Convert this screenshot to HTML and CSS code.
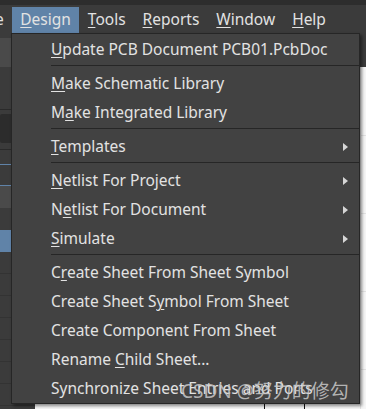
FILE: index.html
```html
<!DOCTYPE html>
<html lang="en">
<head>
    <meta charset="UTF-8" />
    <title>Design Menu</title>
    <link rel="stylesheet" href="styles.css">
</head>
<body>
    <div class="app">
        <div class="title-strip"></div>

        <nav class="menubar">
            <span class="menu-item clipped">e</span>
            <span class="menu-item active"><u>D</u>esign</span>
            <span class="menu-item"><u>T</u>ools</span>
            <span class="menu-item"><u>R</u>eports</span>
            <span class="menu-item"><u>W</u>indow</span>
            <span class="menu-item"><u>H</u>elp</span>
        </nav>

        <div class="workspace">
            <aside class="panel">
                <div class="band gap5"></div>
                <div class="band light h29"></div>
                <div class="band h43 line-bottom"></div>
                <div class="band gap4"></div>
                <div class="band dark h29"></div>
                <div class="band h7 line-bottom"></div>
                <div class="band h14 blue-bottom"></div>
                <div class="band h20 blue-bottom"></div>
                <div class="band light h22"></div>
                <div class="band h22"></div>
                <div class="band blue h22"></div>
                <div class="band rows"></div>
            </aside>
            <div class="editor">
                <div class="toolbar"></div>
                <div class="sheet"></div>
            </div>
        </div>

        <!-- Design dropdown -->
        <ul class="dropdown">
            <li class="item"><span class="label"><u>U</u>pdate PCB Document PCB01.PcbDoc</span></li>
            <li class="sep"></li>
            <li class="item"><span class="label"><u>M</u>ake Schematic Library</span></li>
            <li class="item"><span class="label">M<u>a</u>ke Integrated Library</span></li>
            <li class="sep"></li>
            <li class="item"><span class="label"><u>T</u>emplates</span><span class="arrow"></span></li>
            <li class="sep"></li>
            <li class="item"><span class="label"><u>N</u>etlist For Project</span><span class="arrow"></span></li>
            <li class="item"><span class="label">N<u>e</u>tlist For Document</span><span class="arrow"></span></li>
            <li class="item"><span class="label"><u>S</u>imulate</span><span class="arrow"></span></li>
            <li class="sep"></li>
            <li class="item"><span class="label">C<u>r</u>eate Sheet From Sheet Symbol</span></li>
            <li class="item"><span class="label">Create Sheet S<u>y</u>mbol From Sheet</span></li>
            <li class="item"><span class="label">Create Component From Sheet</span></li>
            <li class="item"><span class="label">Rename <u>C</u>hild Sheet...</span></li>
            <li class="item"><span class="label">Synchronize Sheet Entries and Ports</span></li>
        </ul>

        <div class="watermark">CSDN @努力的修勾</div>
    </div>
</body>
</html>
```

FILE: styles.css
```css
:root {
    --bar-bg: #3b3b3b;
    --menu-bg: #424242;
    --menu-border: #262626;
    --accent: #6083a8;
    --text: #e2e2e2;
    --panel-light: #4a4a4a;
    --panel-dark: #2c2c2c;
}

* {
    margin: 0;
    padding: 0;
    box-sizing: border-box;
}

body {
    width: 366px;
    height: 409px;
    overflow: hidden;
    background-color: var(--bar-bg);
    font-family: "Noto Sans", "DejaVu Sans", sans-serif;
    color: var(--text);
}

.app {
    position: relative;
    height: 409px;
    display: flex;
    flex-direction: column;
}

.title-strip {
    height: 5px;
    background-color: #2d2d2d;
}

/* menu bar */
.menubar {
    height: 28px;
    display: flex;
    align-items: flex-end;
    background-color: var(--bar-bg);
    font-size: 15.5px;
    white-space: nowrap;
}

.menu-item {
    height: 26px;
    line-height: 25px;
    padding: 0 8.5px;
}

.menu-item.clipped {
    margin-left: -5px;
    padding-left: 0;
    padding-right: 8px;
}

.menu-item.active {
    background-color: var(--accent);
}

u {
    text-decoration-thickness: 1px;
    text-underline-offset: 2px;
}

/* background workspace */
.workspace {
    flex: 1;
    display: flex;
}

.panel {
    width: 35px;
    display: flex;
    flex-direction: column;
}

.band {
    flex-shrink: 0;
}

.gap4 { height: 4px; }
.gap5 { height: 5px; }
.h7 { height: 7px; }
.h14 { height: 15px; }
.h20 { height: 21px; }
.h22 { height: 22px; }
.h29 { height: 29px; }
.h43 { height: 43px; }

.band.light {
    background-color: var(--panel-light);
}

.band.dark {
    background-color: var(--panel-dark);
    border-radius: 2px;
}

.band.blue {
    background-color: var(--accent);
}

.line-bottom {
    border-bottom: 1px solid #2a2a2a;
}

.blue-bottom {
    border-bottom: 1px solid var(--accent);
}

.band.rows {
    flex: 1;
    background: repeating-linear-gradient(to bottom, var(--bar-bg) 0 21px, #333 21px 22px);
}

.editor {
    flex: 1;
    display: flex;
    flex-direction: column;
}

.toolbar {
    height: 34px;
    background-color: var(--bar-bg);
}

.sheet {
    flex: 1;
    background-color: #f6f6f6;
    background-image:
        linear-gradient(to right, transparent 229px, #111 229px 230px, transparent 230px 269px, #111 269px 270px, transparent 270px),
        repeating-linear-gradient(to bottom, transparent 0 68px, #e2e2e2 68px 69px, transparent 69px 78px),
        repeating-linear-gradient(to right, transparent 0 325px, #e2e2e2 325px 326px, transparent 326px 400px);
    background-size: 100% 100%, 100% 100%, 100% 100%;
    background-position: 0 337px, 0 0, 0 0;
    background-repeat: no-repeat, repeat, repeat;
}

/* dropdown menu */
.dropdown {
    position: absolute;
    left: 11px;
    top: 33px;
    width: 349px;
    list-style: none;
    padding-top: 1px;
    background-color: var(--menu-bg);
    border: 1px solid var(--menu-border);
    box-shadow: 2px 2px 3px rgba(0, 0, 0, 0.45);
    font-size: 15.5px;
    white-space: nowrap;
}

.item {
    height: 29px;
    display: flex;
    align-items: center;
    padding-left: 39px;
    padding-right: 11px;
    padding-bottom: 1px;
}

.sep {
    margin: 1px 0 3px 39px;
    border-top: 1px solid var(--menu-border);
}

.arrow {
    margin-left: auto;
    margin-top: 1px;
    width: 0;
    height: 0;
    border-left: 5px solid #d6d6d6;
    border-top: 4.5px solid transparent;
    border-bottom: 4.5px solid transparent;
}

.watermark {
    position: absolute;
    left: 181px;
    top: 376px;
    font-family: "Noto Sans", "Noto Sans CJK SC", sans-serif;
    font-size: 19px;
    color: rgba(200, 200, 200, 0.85);
    white-space: nowrap;
}
```
